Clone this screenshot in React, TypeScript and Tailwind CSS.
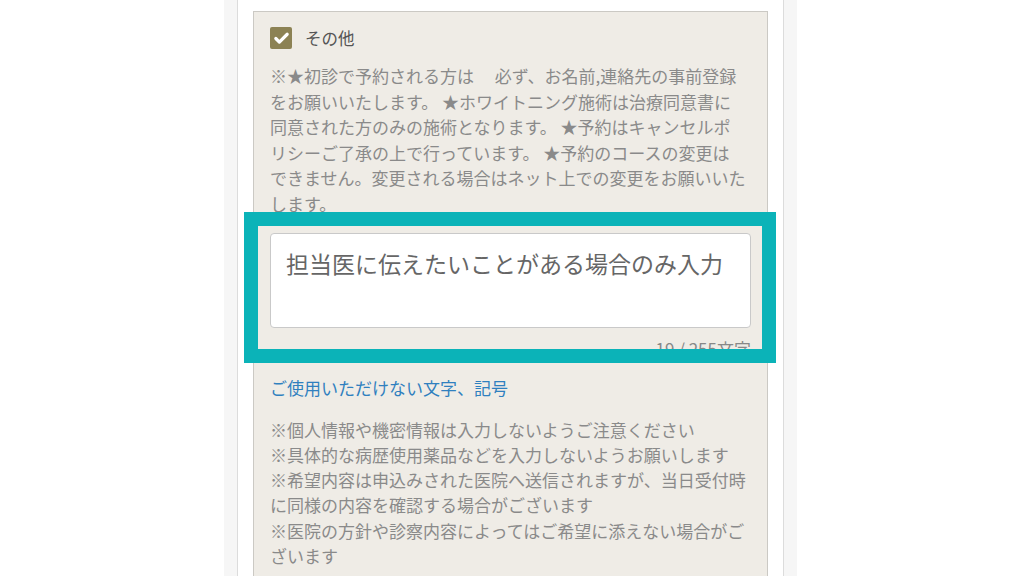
import { Check } from 'lucide-react'

const font = { fontFamily: '"Noto Sans CJK JP", "Noto Sans", sans-serif' }

const intro = [
  '※★初診で予約される方は　 必ず、お名前,連絡先の事前登録',
  'をお願いいたします。 ★ホワイトニング施術は治療同意書に',
  '同意された方のみの施術となります。 ★予約はキャンセルポ',
  'リシーご了承の上で行っています。 ★予約のコースの変更は',
  'できません。変更される場合はネット上での変更をお願いいた',
  'します。',
]

const notes = [
  '※個人情報や機密情報は入力しないようご注意ください',
  '※具体的な病歴使用薬品などを入力しないようお願いします',
  '※希望内容は申込みされた医院へ送信されますが、当日受付時',
  'に同様の内容を確認する場合がございます',
  '※医院の方針や診察内容によってはご希望に添えない場合がご',
  'ざいます',
]

export default function App() {
  return (
    <div className="h-[576px] overflow-hidden bg-white" style={font}>
      <div className="ml-[224px] w-[573px] h-full bg-[#f6f6f6] px-[13px]">
        <div className="h-full bg-white border-x border-[#dcdcdc] px-[15px] pt-[11px]">
          {/* その他 */}
          <div className="bg-[#efece6] border border-[#cbc9c4] px-[16px] pt-[15px] pb-6">
            <label className="flex items-center gap-[13px]">
              <span className="w-[22px] h-[22px] rounded-[2px] bg-[#8c8254] flex items-center justify-center">
                <Check className="w-[17px] h-[17px] text-white" strokeWidth={4.5} />
              </span>
              <span className="text-[16.5px] leading-[22px] text-[#555]">その他</span>
            </label>

            <p className="mt-[14px] text-[17px] leading-[25.6px] text-[#8a8a8a] whitespace-pre">
              {intro.map((l, i) => (
                <span key={i} className="block">{l}</span>
              ))}
            </p>

            {/* 入力欄 */}
            <div className="relative mt-[16px]">
              <div className="h-[95px] bg-white border border-[#c9c9c9] rounded-[4px] px-[15px] pt-[13px]">
                <p className="text-[23px] leading-[32px] text-[#666]">担当医に伝えたいことがある場合のみ入力</p>
              </div>
              <p className="mt-[11px] text-right text-[17px] leading-[20px] text-[#888]">19 / 255文字</p>
              <div className="absolute -left-[26px] -right-[25px] -top-[21px] -bottom-[4px] border-[14px] border-[#0bb3b8]" />
            </div>

            <p className="mt-[17px] text-[17px] leading-[24px] text-[#2f80bf]">ご使用いただけない文字、記号</p>

            <div className="mt-[17px] text-[17px] leading-[25.3px] text-[#8a8a8a]">
              {notes.map((l, i) => (
                <p key={i}>{l}</p>
              ))}
            </div>
          </div>
        </div>
      </div>
    </div>
  )
}
